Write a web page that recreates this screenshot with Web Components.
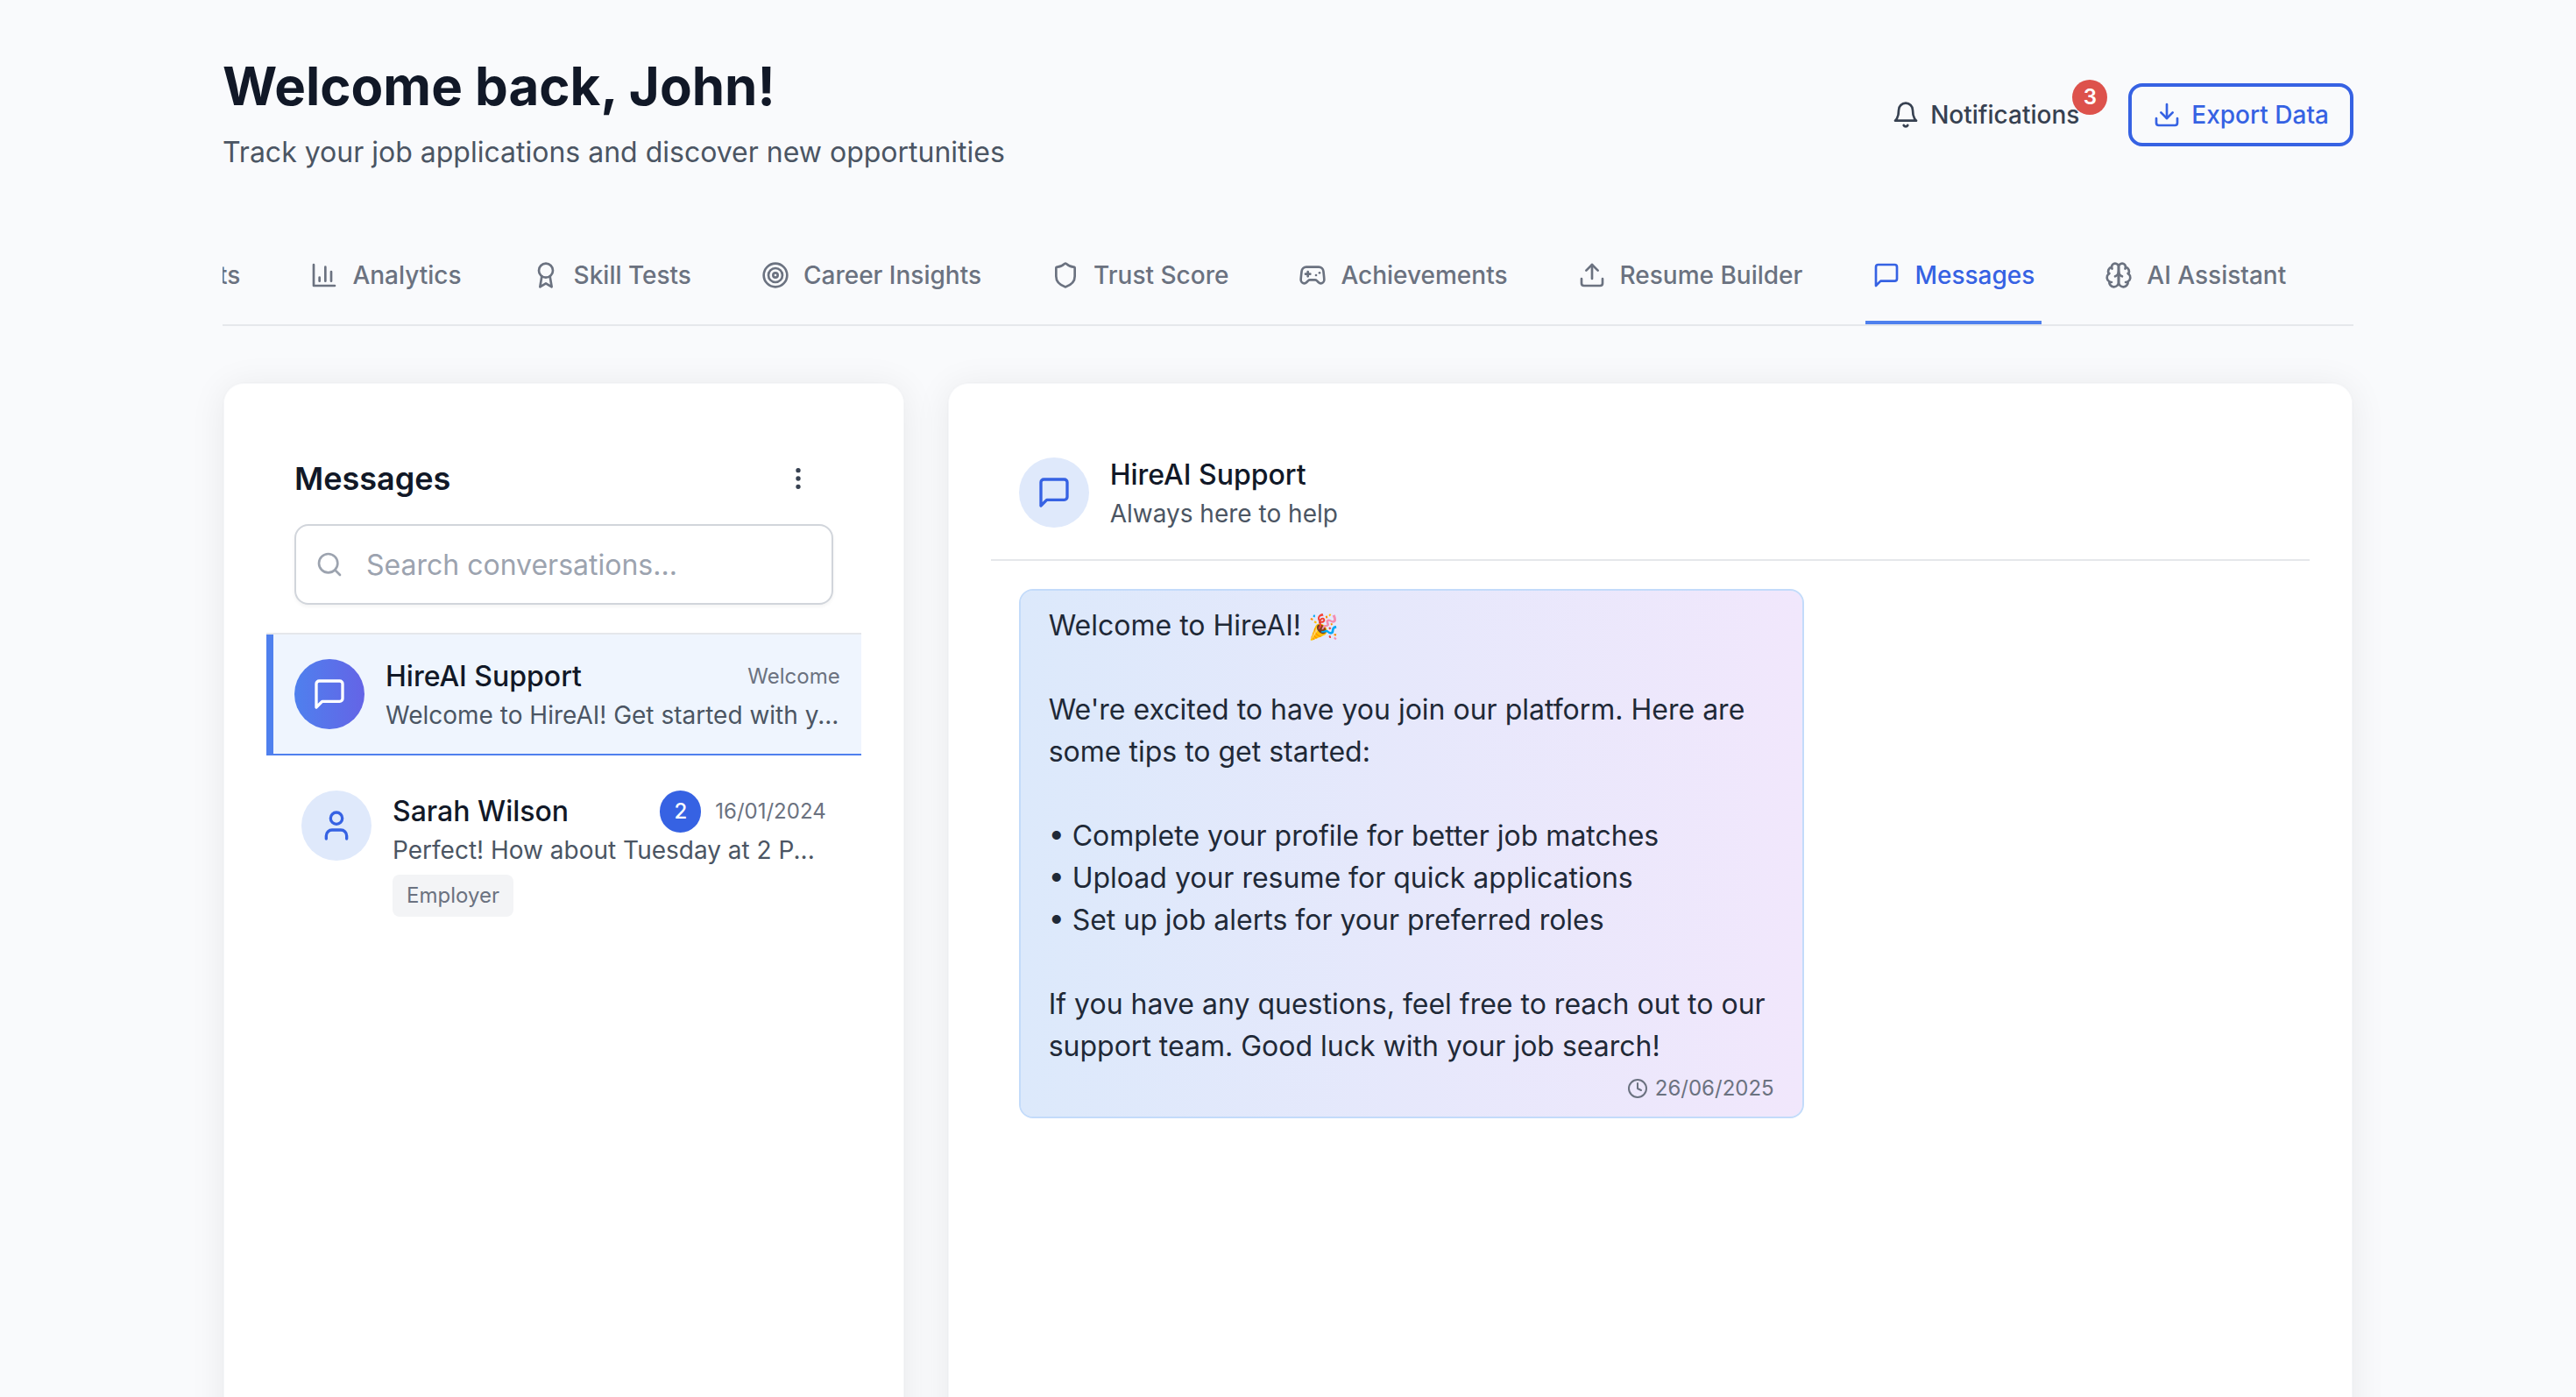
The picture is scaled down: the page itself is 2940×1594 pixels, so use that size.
<!DOCTYPE html>
<html lang="en">
<head>
<meta charset="utf-8">
<title>HireAI – Messages</title>
<style>
  :root {
    --blue: #3662e3;
    --blue-light: #4f80ee;
    --ink: #111827;
    --body: #1f2937;
    --strong: #374151;
    --soft: #4b5563;
    --muted: #6b7280;
    --faint: #9ca3af;
    --line: #e5e7eb;
  }
  body {
    margin: 0;
    background: #f9fafc;
    color: var(--ink);
    font: 400 32px/48px Inter, "Liberation Sans", sans-serif;
  }
</style>
</head>
<body>
<dashboard-page></dashboard-page>

<script>
const ICONS = {
  bell: '<path d="M6 8a6 6 0 0 1 12 0c0 7 3 9 3 9H3s3-2 3-9"/><path d="M10.3 21a1.94 1.94 0 0 0 3.4 0"/>',
  download: '<path d="M21 15v4a2 2 0 0 1-2 2H5a2 2 0 0 1-2-2v-4"/><path d="m7 10 5 5 5-5"/><path d="M12 15V3"/>',
  upload: '<path d="M21 15v4a2 2 0 0 1-2 2H5a2 2 0 0 1-2-2v-4"/><path d="m17 8-5-5-5 5"/><path d="M12 3v12"/>',
  chart: '<path d="M3 3v18h18"/><path d="M18 17V9"/><path d="M13 17V5"/><path d="M8 17v-3"/>',
  award: '<circle cx="12" cy="8" r="6"/><path d="M15.477 12.89 17 22l-5-3-5 3 1.523-9.11"/>',
  target: '<circle cx="12" cy="12" r="10"/><circle cx="12" cy="12" r="6"/><circle cx="12" cy="12" r="2"/>',
  shield: '<path d="M20 13c0 5-3.5 7.5-7.66 8.95a1 1 0 0 1-.67-.01C7.5 20.5 4 18 4 13V6a1 1 0 0 1 1-1c2 0 4.5-1.2 6.24-2.72a1.17 1.17 0 0 1 1.52 0C14.51 3.81 17 5 19 5a1 1 0 0 1 1 1z"/>',
  gamepad: '<path d="M6 11h4"/><path d="M8 9v4"/><path d="M15 12h.01"/><path d="M18 10h.01"/><path d="M17.32 5H6.68a4 4 0 0 0-3.978 3.59c-.006.052-.01.101-.017.152C2.604 9.416 2 14.456 2 16a3 3 0 0 0 3 3c1 0 1.5-.5 2-1l1.414-1.414A2 2 0 0 1 9.828 16h4.344a2 2 0 0 1 1.414.586L17 18c.5.5 1 1 2 1a3 3 0 0 0 3-3c0-1.545-.604-6.584-.685-7.258-.007-.05-.011-.1-.017-.151A4 4 0 0 0 17.32 5z"/>',
  message: '<path d="M21 15a2 2 0 0 1-2 2H7l-4 4V5a2 2 0 0 1 2-2h14a2 2 0 0 1 2 2z"/>',
  brain: '<path d="M12 5a3 3 0 1 0-5.997.125 4 4 0 0 0-2.526 5.77 4 4 0 0 0 .556 6.588A4 4 0 1 0 12 18Z"/><path d="M12 5a3 3 0 1 1 5.997.125 4 4 0 0 1 2.526 5.77 4 4 0 0 1-.556 6.588A4 4 0 1 1 12 18Z"/><path d="M15 13a4.5 4.5 0 0 1-3-4 4.5 4.5 0 0 1-3 4"/><path d="M17.599 6.5a3 3 0 0 0 .399-1.375"/><path d="M6.003 5.125A3 3 0 0 0 6.401 6.5"/><path d="M3.477 10.896a4 4 0 0 1 .585-.396"/><path d="M19.938 10.5a4 4 0 0 1 .585.396"/><path d="M6 18a4 4 0 0 1-1.967-.516"/><path d="M19.967 17.484A4 4 0 0 1 18 18"/>',
  more: '<circle cx="12" cy="12" r="1"/><circle cx="12" cy="5" r="1"/><circle cx="12" cy="19" r="1"/>',
  search: '<circle cx="11" cy="11" r="8"/><path d="m21 21-4.3-4.3"/>',
  user: '<path d="M19 21v-2a4 4 0 0 0-4-4H9a4 4 0 0 0-4 4v2"/><circle cx="12" cy="7" r="4"/>',
  clock: '<circle cx="12" cy="12" r="10"/><path d="M12 6v6l4 2"/>'
};

const RESET = `
  *, *::before, *::after { box-sizing: border-box; }
  h1, h2, h3, p, ul { margin: 0; padding: 0; }
  button, input { font: inherit; color: inherit; margin: 0; }
  button { background: none; border: 0; padding: 0; cursor: pointer; }
`;

function define(name, css, html) {
  const template = document.createElement('template');
  customElements.define(name, class extends HTMLElement {
    connectedCallback() {
      if (this.shadowRoot) return;
      template.innerHTML = `<style>${RESET}${css}</style>${typeof html === 'function' ? html(this) : html}`;
      this.attachShadow({ mode: 'open' }).append(template.content.cloneNode(true));
    }
  });
}

define('line-icon', `
  :host { display: block; flex: none; width: var(--icon-size, 32px); height: var(--icon-size, 32px); }
  svg { display: block; width: 100%; height: 100%; }
`, el => `<svg viewBox="0 0 24 24" fill="none" stroke="currentColor" stroke-width="2" stroke-linecap="round" stroke-linejoin="round" aria-hidden="true">${ICONS[el.getAttribute('name')]}</svg>`);

define('action-button', `
  :host { display: block; }
  button { position: relative; display: flex; align-items: center; gap: 12px; padding: 12px 24px;
    font-size: 28px; line-height: 40px; font-weight: 500; color: var(--strong); border-radius: 16px; }
  :host([variant=outline]) button { border: 4px solid var(--blue); color: var(--blue); }
  .count { position: absolute; top: -8px; right: -8px; width: 40px; height: 40px; border-radius: 50%;
    background: #dd524c; color: #fff; font-size: 24px; line-height: 40px; font-weight: 600; text-align: center; }
`, el => `<button type="button"><line-icon name="${el.getAttribute('icon')}"></line-icon><slot></slot>${
  el.hasAttribute('count') ? `<span class="count">${el.getAttribute('count')}</span>` : ''}</button>`);

define('page-header', `
  :host { display: flex; align-items: center; justify-content: space-between; }
  h1 { font-size: 60px; line-height: 68px; font-weight: 700; }
  p { margin-top: 18px; color: var(--soft); }
  .actions { display: flex; align-items: center; gap: 32px; }
`, `
  <div>
    <h1>Welcome back, John!</h1>
    <p>Track your job applications and discover new opportunities</p>
  </div>
  <div class="actions">
    <action-button icon="bell" count="3">Notifications</action-button>
    <action-button icon="download" variant="outline">Export Data</action-button>
  </div>
`);

define('nav-tab', `
  :host { display: block; flex: none; }
  button { display: flex; align-items: center; gap: 16px; padding: 32px 8px; border-bottom: 4px solid transparent;
    font-size: 28px; line-height: 40px; font-weight: 500; color: var(--muted); white-space: nowrap; }
  :host([active]) button { color: var(--blue); border-color: var(--blue-light); }
`, el => `<button type="button"${el.hasAttribute('active') ? ' aria-current="page"' : ''}>${
  el.hasAttribute('icon') ? `<line-icon name="${el.getAttribute('icon')}"></line-icon>` : ''}<slot></slot></button>`);

define('nav-tabs', `
  :host { display: block; border-bottom: 2px solid var(--line); overflow: hidden; }
  nav { display: flex; gap: 64px; margin-left: -12px; }
`, `
  <nav aria-label="Dashboard">
    <nav-tab>ts</nav-tab>
    <nav-tab icon="chart">Analytics</nav-tab>
    <nav-tab icon="award">Skill Tests</nav-tab>
    <nav-tab icon="target">Career Insights</nav-tab>
    <nav-tab icon="shield">Trust Score</nav-tab>
    <nav-tab icon="gamepad">Achievements</nav-tab>
    <nav-tab icon="upload">Resume Builder</nav-tab>
    <nav-tab icon="message" active>Messages</nav-tab>
    <nav-tab icon="brain">AI Assistant</nav-tab>
  </nav>
`);

define('panel-card', `
  :host { display: block; min-width: 0; padding: 48px; background: #fff; background-clip: padding-box;
    border: 2px solid rgba(0, 0, 0, .01); border-radius: 24px; box-shadow: 0 4px 40px rgba(0, 0, 0, .07); }
`, '<slot></slot>');

define('round-avatar', `
  :host { display: grid; place-items: center; flex: none; width: 80px; height: 80px; border-radius: 50%;
    background: #dfe9fb; color: var(--blue); --icon-size: 40px; }
  :host([filled]) { background: linear-gradient(to right, #4f80ee, #6464e6); color: #fff; }
`, el => `<line-icon name="${el.getAttribute('icon')}"></line-icon>`);

define('conversation-item', `
  :host { display: flex; align-items: flex-start; gap: 24px; padding: 40px; }
  :host([active]) { align-items: center; padding: 24px; background: #eff5fe;
    border-left: 8px solid var(--blue-light); border-bottom: 2px solid var(--blue-light); }
  .text { flex: 1; min-width: 0; }
  .top { display: flex; align-items: center; justify-content: space-between; }
  h3 { font-size: 32px; line-height: 48px; font-weight: 500; }
  .meta { display: flex; align-items: center; gap: 16px; font-size: 24px; line-height: 32px; color: var(--muted); }
  .unread { padding: 8px 16px; border-radius: 24px; background: var(--blue); color: #fff; font-weight: 500; }
  p { font-size: 28px; line-height: 40px; color: var(--soft); white-space: nowrap; overflow: hidden; text-overflow: ellipsis; }
  .tag { display: block; width: fit-content; margin-top: 8px; padding: 8px 16px; border-radius: 8px;
    background: #f3f4f6; color: var(--muted); font-size: 24px; line-height: 32px; }
`, el => {
  const a = n => el.getAttribute(n);
  return `
  <round-avatar icon="${a('icon')}"${el.hasAttribute('active') ? ' filled' : ''}></round-avatar>
  <div class="text">
    <div class="top">
      <h3>${a('name')}</h3>
      <div class="meta">${a('unread') ? `<span class="unread">${a('unread')}</span>` : ''}<span>${a('when')}</span></div>
    </div>
    <p><slot></slot></p>
    ${a('tag') ? `<span class="tag">${a('tag')}</span>` : ''}
  </div>`;
});

define('search-box', `
  :host { display: grid; align-items: center; }
  label, input { grid-area: 1 / 1; }
  label { z-index: 1; justify-self: start; margin-left: 24px; color: var(--faint); }
  input { width: 100%; height: 92px; padding: 0 24px 0 80px; background: #fff; border: 2px solid #d1d5db;
    border-radius: 16px; box-shadow: 0 2px 4px rgba(0, 0, 0, .05); color: var(--ink); outline: 0; }
  input::placeholder { color: var(--faint); opacity: 1; }
`, `
  <label for="q" aria-label="Search conversations"><line-icon name="search"></line-icon></label>
  <input id="q" type="text" placeholder="Search conversations...">
`);

define('conversation-list', `
  :host { display: block; }
  header { padding: 32px; border-bottom: 2px solid var(--line); }
  .bar { display: flex; align-items: center; justify-content: space-between; margin-bottom: 24px; }
  h2 { font-size: 36px; line-height: 56px; font-weight: 600; }
  .bar button { padding: 12px 24px; color: var(--strong); }
`, `
  <header>
    <div class="bar">
      <h2>Messages</h2>
      <button type="button" aria-label="More options"><line-icon name="more"></line-icon></button>
    </div>
    <search-box></search-box>
  </header>
  <conversation-item active icon="message" name="HireAI Support" when="Welcome">Welcome to HireAI! Get started with y...</conversation-item>
  <conversation-item icon="user" name="Sarah Wilson" unread="2" when="16/01/2024" tag="Employer">Perfect! How about Tuesday at 2 P...</conversation-item>
`);

define('message-bubble', `
  :host { display: block; max-width: 896px; padding: 16px 32px; border: 2px solid #c3dbfa; border-radius: 16px;
    background: linear-gradient(to right, #dce9fb, #f1e7fc) padding-box; color: var(--body); }
  .body { white-space: pre-line; }
  .time { display: flex; align-items: center; justify-content: flex-end; gap: 8px; margin-top: 8px;
    font-size: 24px; line-height: 32px; color: var(--muted); --icon-size: 24px; }
`, el => `
  <div class="body"><slot></slot></div>
  <div class="time"><line-icon name="clock"></line-icon><span>${el.getAttribute('date')}</span></div>
`);

define('chat-thread', `
  :host { display: block; }
  header { display: flex; align-items: center; gap: 24px; padding: 32px; border-bottom: 2px solid var(--line); }
  h3 { font-size: 32px; line-height: 48px; font-weight: 500; }
  header p { font-size: 28px; line-height: 40px; color: var(--soft); }
  .log { padding: 32px; }
  .emoji { font-size: 28px; line-height: 32px; }
`, `
  <header>
    <round-avatar icon="message"></round-avatar>
    <div>
      <h3>HireAI Support</h3>
      <p>Always here to help</p>
    </div>
  </header>
  <div class="log">
    <message-bubble date="26/06/2025">Welcome to HireAI!<span class="emoji"> 🎉</span>

We're excited to have you join our platform. Here are some tips to get started:

• Complete your profile for better job matches
• Upload your resume for quick applications
• Set up job alerts for your preferred roles

If you have any questions, feel free to reach out to our support team. Good luck with your job search!</message-bubble>
  </div>
`);

define('dashboard-page', `
  :host { display: flex; flex-direction: column; max-width: 2560px; height: 100vh; margin: 0 auto;
    padding: 64px 64px 0; box-sizing: border-box; overflow: hidden; }
  nav-tabs { flex: none; margin-top: 64px; }
  main { flex: none; display: grid; grid-template-columns: repeat(3, minmax(0, 1fr)); gap: 48px; margin-top: 64px; min-height: 100vh; }
  .wide { grid-column: span 2; }
`, `
  <page-header></page-header>
  <nav-tabs></nav-tabs>
  <main>
    <panel-card><conversation-list></conversation-list></panel-card>
    <panel-card class="wide"><chat-thread></chat-thread></panel-card>
  </main>
`);
</script>
</body>
</html>
